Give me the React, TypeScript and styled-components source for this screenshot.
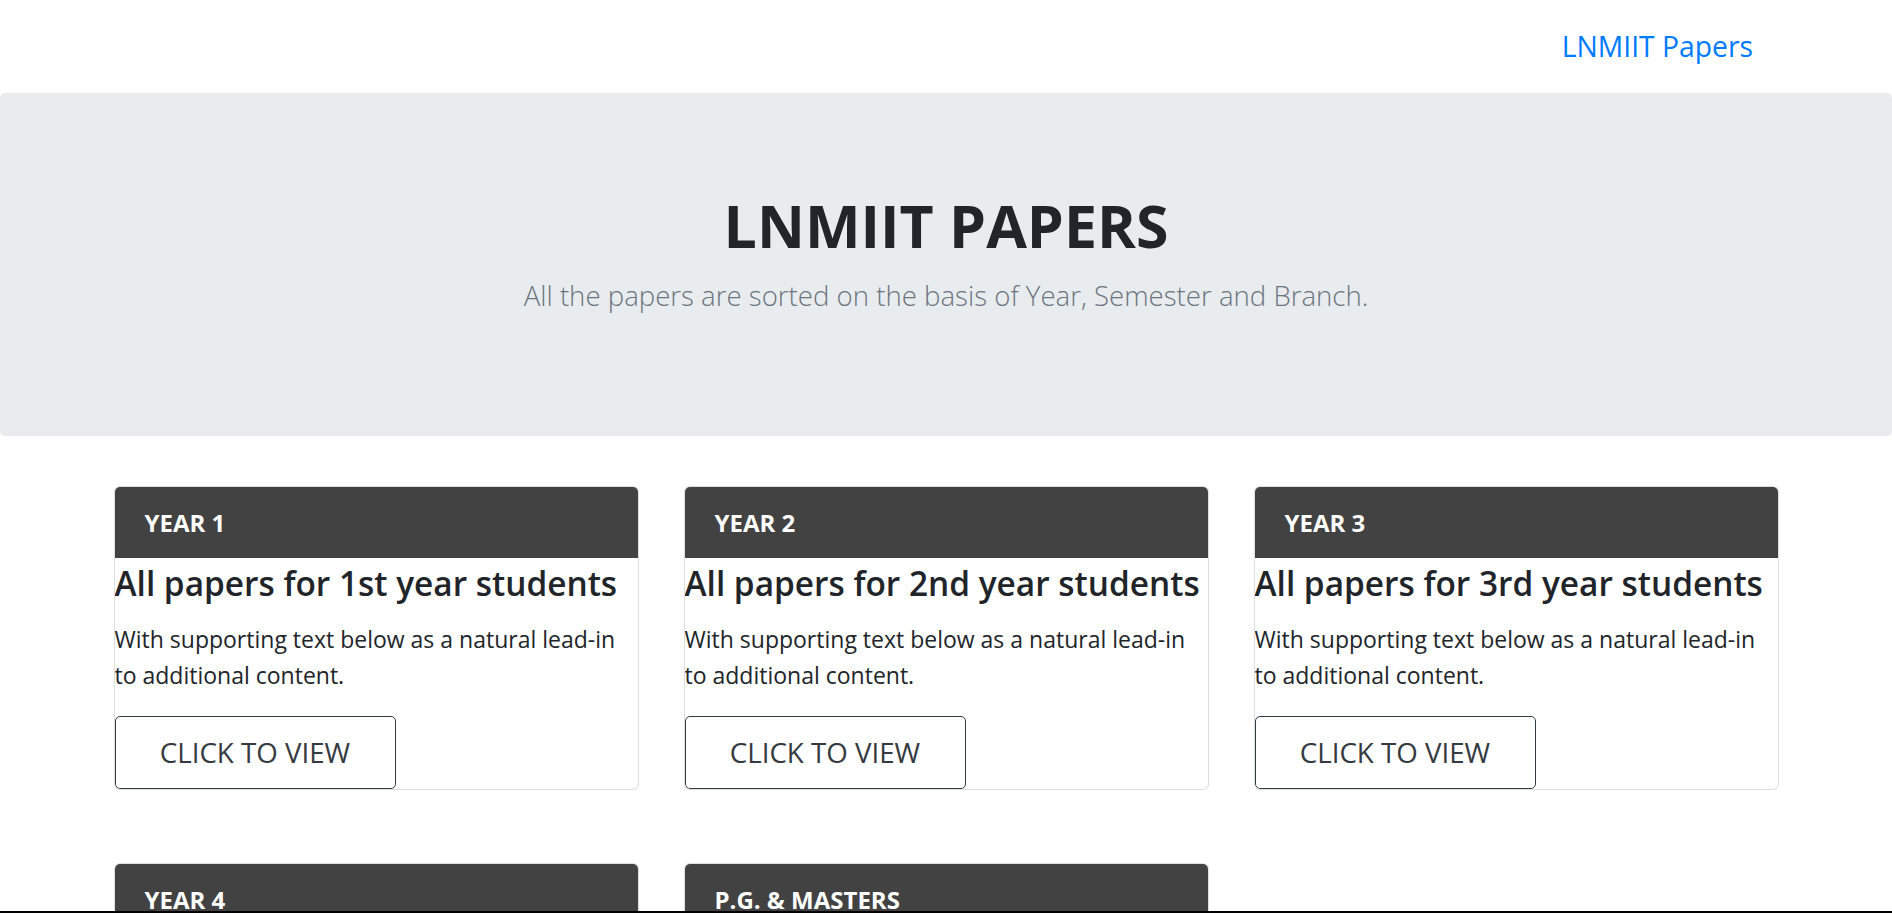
import React from "react";
import styled, { createGlobalStyle } from "styled-components";

const GlobalStyle = createGlobalStyle`
  html, body { margin: 0; padding: 0; background: #fff; }
  body {
    font-family: "Open Sans", "Noto Sans", "Liberation Sans", sans-serif;
    color: #212529;
  }
  * { box-sizing: border-box; }
`;

const Navbar = styled.nav`
  height: 93px;
  display: flex;
  align-items: center;
  justify-content: flex-end;
  padding-right: 139px;
`;

const Brand = styled.a`
  font-size: 28.3px;
  line-height: 45px;
  color: #007bff;
  text-decoration: none;
`;

const Jumbotron = styled.header`
  background: #e9ecef;
  border-radius: 5px;
  padding: 96px 48px;
  margin-bottom: 50px;
  text-align: center;
  height: 343px;
`;

const Headline = styled.h1`
  margin: 0 0 12px;
  font-size: 59px;
  line-height: 72px;
  font-weight: 700;
  color: #212529;
`;

const Lead = styled.p`
  margin: 0;
  font-size: 27.6px;
  line-height: 45px;
  font-weight: 300;
  color: #6c757d;
`;

const Container = styled.main`
  width: 1710px;
  margin: 0 auto;
  padding: 0 22.5px 40px;
`;

const Grid = styled.div`
  display: grid;
  grid-template-columns: repeat(3, 525px);
  column-gap: 45px;
  row-gap: 73px;
  align-items: start;
`;

const Card = styled.section`
  border: 1px solid rgba(0, 0, 0, 0.125);
  border-radius: 6px;
  overflow: hidden;
  background: #fff;
`;

const CardHeader = styled.div`
  background: #424242;
  color: #fff;
  padding: 18px 30px 17px;
  font-size: 24px;
  line-height: 36px;
  font-weight: 700;
  text-transform: uppercase;
`;

const CardTitle = styled.h4`
  margin: 4px 0 16px;
  font-size: 33.4px;
  line-height: 43px;
  font-weight: 600;
  white-space: nowrap;
  color: #212529;
`;

const CardText = styled.p`
  margin: 0 0 23px;
  font-size: 23px;
  line-height: 36px;
  color: #212529;
`;

const ViewButton = styled.button`
  display: block;
  width: 281px;
  height: 73px;
  margin: 0;
  border: 1px solid #343a40;
  border-radius: 5px;
  background: transparent;
  color: #343a40;
  font-family: inherit;
  font-size: 27.7px;
  line-height: 45px;
  text-align: center;
  cursor: pointer;
`;

const BottomRule = styled.div`
  position: fixed;
  left: 0;
  right: 0;
  bottom: 0;
  height: 4px;
  border-top: 2px solid #000;
  background: #fff;
`;

const years = [
  { label: "Year 1", ord: "1st" },
  { label: "Year 2", ord: "2nd" },
  { label: "Year 3", ord: "3rd" },
  { label: "Year 4", ord: "4th" },
  { label: "P.G. & Masters", ord: "P.G." },
];

export default function App() {
  return (
    <>
      <GlobalStyle />
      <Navbar>
        <Brand href="#">LNMIIT Papers</Brand>
      </Navbar>
      <Jumbotron>
        <Headline>LNMIIT PAPERS</Headline>
        <Lead>All the papers are sorted on the basis of Year, Semester and Branch.</Lead>
      </Jumbotron>
      <Container>
        <Grid>
          {years.map((y) => (
            <Card key={y.label}>
              <CardHeader>{y.label}</CardHeader>
              <CardTitle>All papers for {y.ord} year students</CardTitle>
              <CardText>
                With supporting text below as a natural lead-in to additional content.
              </CardText>
              <ViewButton>CLICK TO VIEW</ViewButton>
            </Card>
          ))}
        </Grid>
      </Container>
      <BottomRule />
    </>
  );
}
